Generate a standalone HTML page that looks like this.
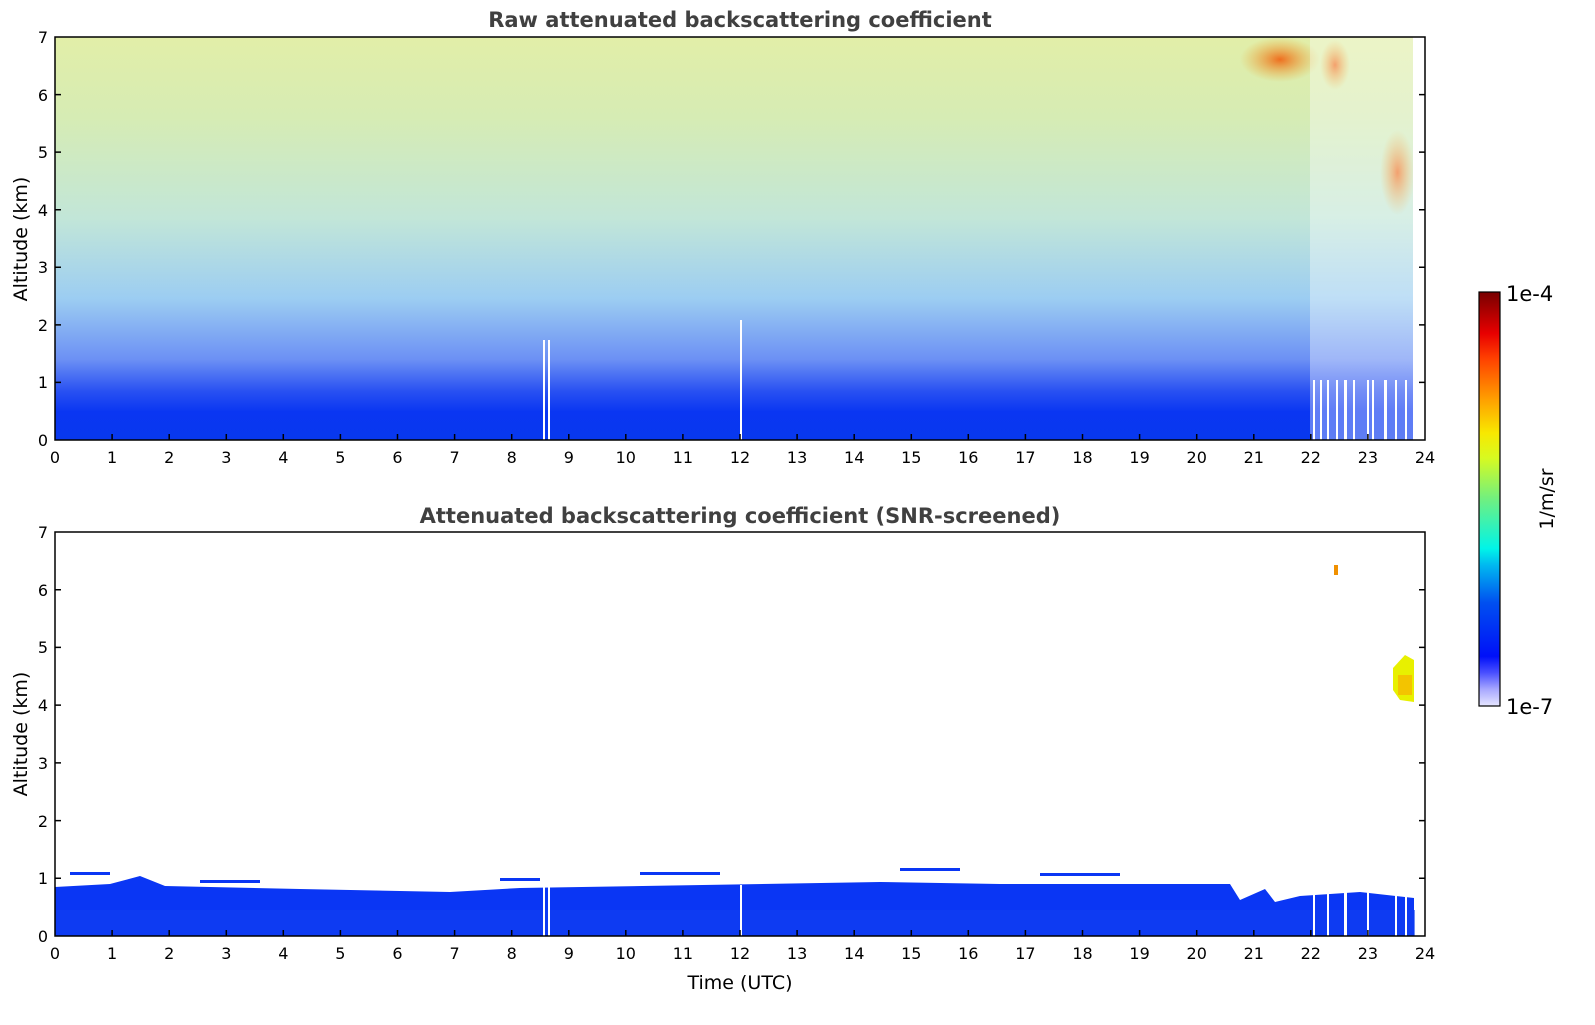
<!DOCTYPE html>
<html><head><meta charset="utf-8"><style>
html,body{margin:0;padding:0;background:#fff;}
svg text{font-family:"DejaVu Sans","Liberation Sans",sans-serif;}
</style></head><body>
<svg width="1595" height="1020" viewBox="0 0 1595 1020" xmlns="http://www.w3.org/2000/svg">
<defs>
<linearGradient id="raw" x1="0" y1="0" x2="0" y2="1">
<stop offset="0" stop-color="#e2eea8"/>
<stop offset="0.2" stop-color="#d6ecb4"/>
<stop offset="0.45" stop-color="#c2e6d8"/>
<stop offset="0.65" stop-color="#9ccdf2"/>
<stop offset="0.8" stop-color="#6c90f4"/>
<stop offset="0.88" stop-color="#2850f2"/>
<stop offset="0.93" stop-color="#0a36f2"/>
<stop offset="1" stop-color="#0838ee"/>
</linearGradient>
<linearGradient id="cb" x1="0" y1="1" x2="0" y2="0">
<stop offset="0" stop-color="#e6e6ff"/>
<stop offset="0.04" stop-color="#a8a8ff"/>
<stop offset="0.08" stop-color="#4a50ff"/>
<stop offset="0.12" stop-color="#0010f8"/>
<stop offset="0.25" stop-color="#0050f0"/>
<stop offset="0.34" stop-color="#00b8f0"/>
<stop offset="0.38" stop-color="#00f4e8"/>
<stop offset="0.5" stop-color="#70f080"/>
<stop offset="0.6" stop-color="#d8fa20"/>
<stop offset="0.66" stop-color="#f8e800"/>
<stop offset="0.74" stop-color="#ffa000"/>
<stop offset="0.84" stop-color="#ff4000"/>
<stop offset="0.9" stop-color="#e80000"/>
<stop offset="1" stop-color="#780000"/>
</linearGradient>
<radialGradient id="orng" cx="0.5" cy="0.5" r="0.5">
<stop offset="0" stop-color="#f06010" stop-opacity="0.9"/>
<stop offset="1" stop-color="#f0a020" stop-opacity="0"/>
</radialGradient>
</defs>

<text x="740" y="27" font-size="21" font-weight="bold" fill="#404040" text-anchor="middle">Raw attenuated backscattering coefficient</text>
<text x="740" y="523" font-size="21" font-weight="bold" fill="#404040" text-anchor="middle">Attenuated backscattering coefficient (SNR-screened)</text>

<rect x="55" y="37" width="1370" height="403" fill="url(#raw)"/>
<rect x="1240" y="37" width="80" height="45" fill="url(#orng)"/>
<rect x="1320" y="40" width="30" height="50" fill="url(#orng)"/>
<rect x="1380" y="130" width="35" height="85" fill="url(#orng)"/>
<rect x="1310" y="37" width="105" height="403" fill="#fff" opacity="0.35"/>
<g fill="#fff">
<rect x="543" y="340" width="2" height="100"/><rect x="548" y="340" width="2" height="100"/>
<rect x="740" y="320" width="2" height="120"/>
<rect x="1313" y="380" width="2" height="60"/><rect x="1320" y="380" width="2" height="60"/><rect x="1327" y="380" width="2" height="60"/>
<rect x="1336" y="380" width="2" height="60"/><rect x="1344" y="380" width="3" height="60"/><rect x="1353" y="380" width="2" height="60"/>
<rect x="1367" y="380" width="2" height="60"/><rect x="1372" y="380" width="2" height="60"/><rect x="1384" y="380" width="3" height="60"/>
<rect x="1395" y="380" width="2" height="60"/><rect x="1405" y="380" width="2" height="60"/><rect x="1413" y="37" width="12" height="403"/>
</g>
<rect x="55" y="37" width="1370" height="403" fill="none" stroke="#000" stroke-width="1.5"/>

<path d="M55,887 L110,884 L140,876 L165,886 L300,889 L450,892 L520,888 L880,882 L1000,884 L1230,884 L1240,900 L1265,889 L1275,902 L1300,896 L1360,892 L1414,898 L1414,936 L55,936 Z" fill="#0a36f4"/>
<rect x="55" y="910" width="1360" height="26" fill="#1040f0" opacity="0.6"/>
<g fill="#fff">
<rect x="543" y="885" width="2" height="51"/><rect x="548" y="885" width="2" height="51"/><rect x="740" y="885" width="2" height="51"/>
<rect x="1313" y="890" width="2" height="46"/><rect x="1327" y="890" width="2" height="46"/><rect x="1344" y="890" width="3" height="46"/><rect x="1367" y="890" width="2" height="46"/><rect x="1395" y="890" width="2" height="46"/><rect x="1405" y="890" width="2" height="46"/>
</g>
<g fill="#0a36f4">
<rect x="70" y="872" width="40" height="3"/><rect x="200" y="880" width="60" height="3"/><rect x="500" y="878" width="40" height="3"/><rect x="640" y="872" width="80" height="3"/><rect x="900" y="868" width="60" height="3"/><rect x="1040" y="873" width="80" height="3"/>
</g>
<path d="M1393,668 L1405,655 L1414,660 L1414,702 L1400,700 L1393,690 Z" fill="#e8f000"/>
<rect x="1398" y="675" width="14" height="20" fill="#f8b000" opacity="0.7"/>
<rect x="1334" y="565" width="4" height="10" fill="#f09000"/>
<rect x="55" y="532" width="1370" height="404" fill="none" stroke="#000" stroke-width="1.5"/>

<g stroke="#000" stroke-width="1.5">
<path d="M55,382.4h6M55,324.9h6M55,267.3h6M55,209.7h6M55,152.1h6M55,94.6h6M1425,382.4h-6M1425,324.9h-6M1425,267.3h-6M1425,209.7h-6M1425,152.1h-6M1425,94.6h-6"/>
<path d="M55,878.3h6M55,820.6h6M55,762.9h6M55,705.1h6M55,647.4h6M55,589.7h6M1425,878.3h-6M1425,820.6h-6M1425,762.9h-6M1425,705.1h-6M1425,647.4h-6M1425,589.7h-6"/>
<path d="M112.1,440v-6M169.2,440v-6M226.3,440v-6M283.3,440v-6M340.4,440v-6M397.5,440v-6M454.6,440v-6M511.7,440v-6M568.8,440v-6M625.8,440v-6M682.9,440v-6M740,440v-6M797.1,440v-6M854.2,440v-6M911.3,440v-6M968.3,440v-6M1025.4,440v-6M1082.5,440v-6M1139.6,440v-6M1196.7,440v-6M1253.8,440v-6M1310.8,440v-6M1367.9,440v-6"/>
<path d="M112.1,936v-6M169.2,936v-6M226.3,936v-6M283.3,936v-6M340.4,936v-6M397.5,936v-6M454.6,936v-6M511.7,936v-6M568.8,936v-6M625.8,936v-6M682.9,936v-6M740,936v-6M797.1,936v-6M854.2,936v-6M911.3,936v-6M968.3,936v-6M1025.4,936v-6M1082.5,936v-6M1139.6,936v-6M1196.7,936v-6M1253.8,936v-6M1310.8,936v-6M1367.9,936v-6"/>
</g>

<g font-size="16" fill="#000" text-anchor="end">
<text x="48" y="446">0</text><text x="48" y="388">1</text><text x="48" y="331">2</text><text x="48" y="273">3</text><text x="48" y="216">4</text><text x="48" y="158">5</text><text x="48" y="101">6</text><text x="48" y="43">7</text>
<text x="48" y="942">0</text><text x="48" y="884">1</text><text x="48" y="827">2</text><text x="48" y="769">3</text><text x="48" y="711">4</text><text x="48" y="653">5</text><text x="48" y="596">6</text><text x="48" y="538">7</text>
</g>
<g font-size="16" fill="#000" text-anchor="middle">
<text x="55" y="463">0</text><text x="112.1" y="463">1</text><text x="169.2" y="463">2</text><text x="226.3" y="463">3</text><text x="283.3" y="463">4</text><text x="340.4" y="463">5</text><text x="397.5" y="463">6</text><text x="454.6" y="463">7</text><text x="511.7" y="463">8</text><text x="568.8" y="463">9</text><text x="625.8" y="463">10</text><text x="682.9" y="463">11</text><text x="740" y="463">12</text><text x="797.1" y="463">13</text><text x="854.2" y="463">14</text><text x="911.3" y="463">15</text><text x="968.3" y="463">16</text><text x="1025.4" y="463">17</text><text x="1082.5" y="463">18</text><text x="1139.6" y="463">19</text><text x="1196.7" y="463">20</text><text x="1253.8" y="463">21</text><text x="1310.8" y="463">22</text><text x="1367.9" y="463">23</text><text x="1425" y="463">24</text>
<text x="55" y="959">0</text><text x="112.1" y="959">1</text><text x="169.2" y="959">2</text><text x="226.3" y="959">3</text><text x="283.3" y="959">4</text><text x="340.4" y="959">5</text><text x="397.5" y="959">6</text><text x="454.6" y="959">7</text><text x="511.7" y="959">8</text><text x="568.8" y="959">9</text><text x="625.8" y="959">10</text><text x="682.9" y="959">11</text><text x="740" y="959">12</text><text x="797.1" y="959">13</text><text x="854.2" y="959">14</text><text x="911.3" y="959">15</text><text x="968.3" y="959">16</text><text x="1025.4" y="959">17</text><text x="1082.5" y="959">18</text><text x="1139.6" y="959">19</text><text x="1196.7" y="959">20</text><text x="1253.8" y="959">21</text><text x="1310.8" y="959">22</text><text x="1367.9" y="959">23</text><text x="1425" y="959">24</text>
</g>
<text x="740" y="989" font-size="19" fill="#000" text-anchor="middle">Time (UTC)</text>
<text transform="translate(27,239) rotate(-90)" font-size="19" fill="#000" text-anchor="middle">Altitude (km)</text>
<text transform="translate(27,734) rotate(-90)" font-size="19" fill="#000" text-anchor="middle">Altitude (km)</text>

<rect x="1479" y="292" width="21" height="414" fill="url(#cb)" stroke="#000" stroke-width="1.2"/>
<text x="1506" y="301" font-size="21" fill="#000">1e-4</text>
<text x="1506" y="714" font-size="21" fill="#000">1e-7</text>
<text transform="translate(1553,499) rotate(-90)" font-size="19" fill="#000" text-anchor="middle">1/m/sr</text>
</svg>
</body></html>
